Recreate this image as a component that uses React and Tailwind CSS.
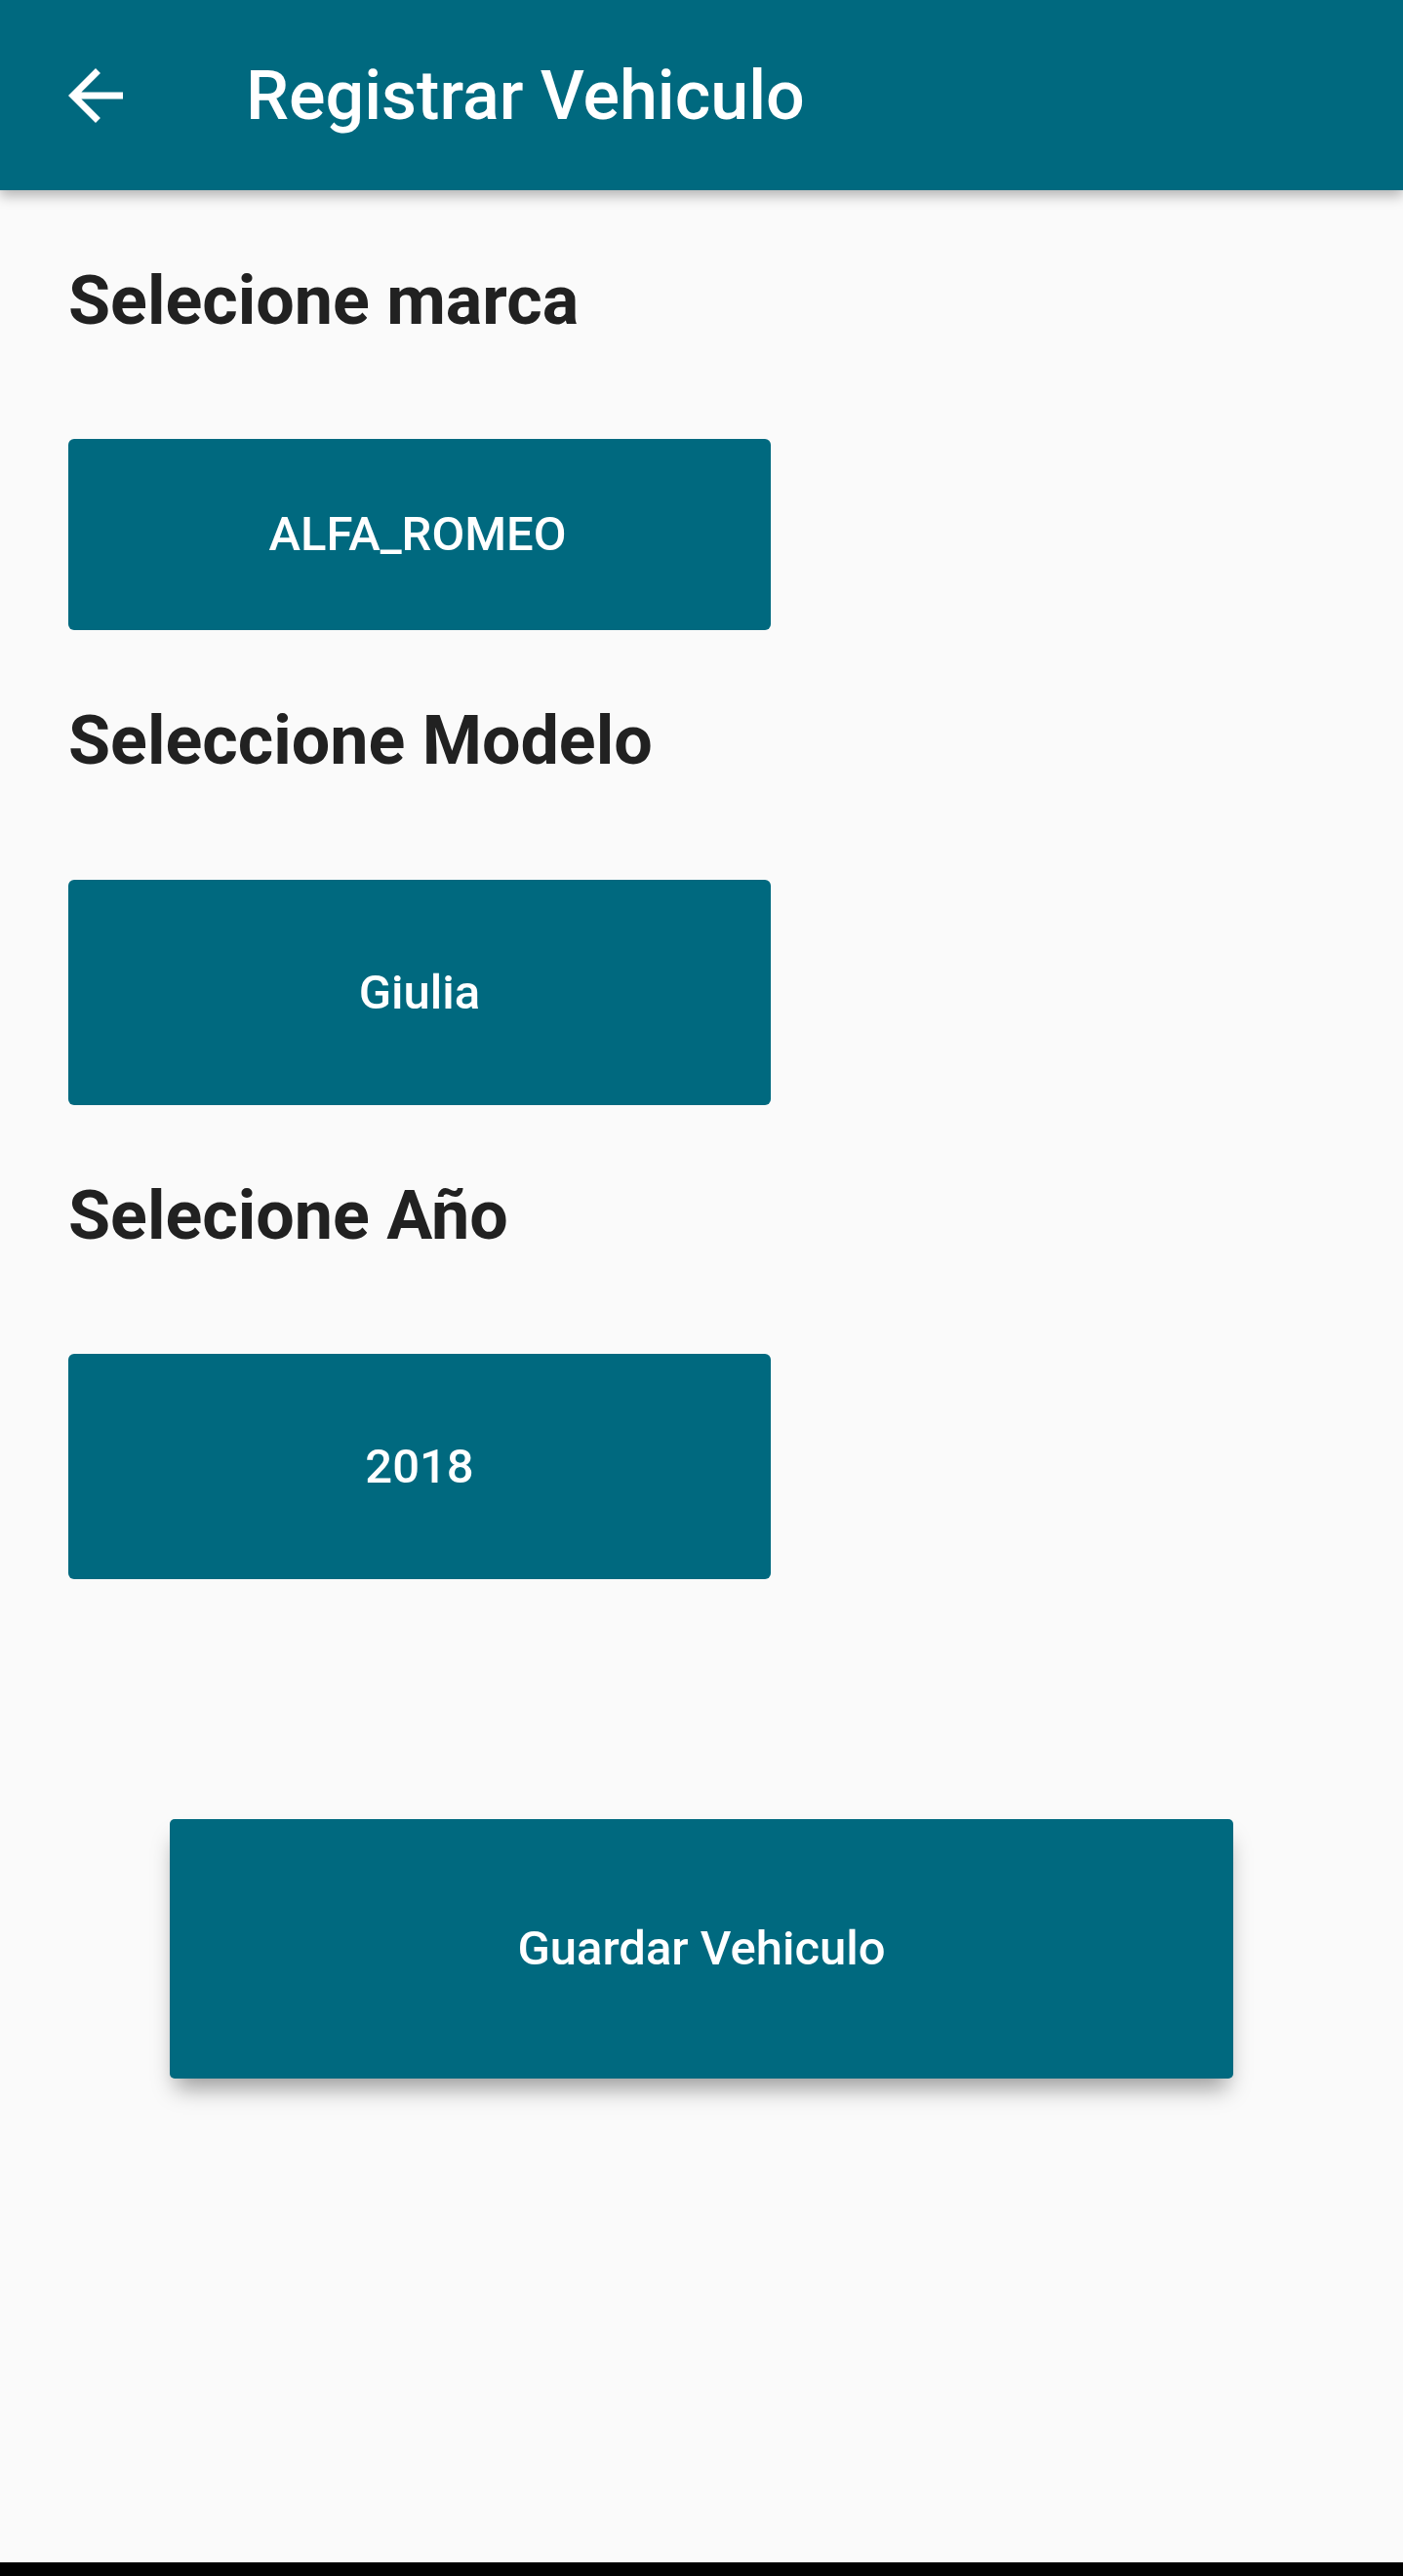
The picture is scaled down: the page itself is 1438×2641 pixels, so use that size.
import React from "react";

const BackArrow = () => (
  <svg viewBox="0 0 24 24" className="w-[84px] h-[84px]" fill="#ffffff">
    <path d="M20 11H7.83l5.59-5.59L12 4l-8 8 8 8 1.41-1.41L7.83 13H20v-2z" />
  </svg>
);

const Heading = ({ children, className = "" }) => (
  <h2
    className={`ml-[70px] text-[70px] leading-[70px] font-bold text-[#212121] ${className}`}
  >
    {children}
  </h2>
);

const PickerButton = ({ label, height, className = "" }) => (
  <button
    className={`ml-[70px] w-[720px] ${height} rounded-[6px] bg-[#00697f] text-white text-[49px] font-medium flex items-center justify-center ${className}`}
  >
    {label}
  </button>
);

export default function App() {
  return (
    <div
      className="h-[2641px] flex flex-col bg-[#fafafa]"
      style={{ fontFamily: "Roboto, 'Noto Sans', sans-serif" }}
    >
      <header className="h-[195px] shrink-0 bg-[#00697f] flex items-center shadow-[0_6px_12px_rgba(0,0,0,0.28)] relative z-10">
        <div className="w-[196px] h-full flex items-center pl-[56px]">
          <BackArrow />
        </div>
        <h1 className="ml-[56px] text-white text-[70px] font-medium leading-none">
          Registrar Vehiculo
        </h1>
      </header>

      <Heading className="mt-[78px]">Selecione marca</Heading>
      <PickerButton label="ALFA_ROMEO" height="h-[196px]" className="mt-[107px] pr-[4px]" />

      <Heading className="mt-[78px]">Seleccione Modelo</Heading>
      <PickerButton label="Giulia" height="h-[231px]" className="mt-[108px]" />

      <Heading className="mt-[78px]">Selecione Año</Heading>
      <PickerButton label="2018" height="h-[231px]" className="mt-[107px]" />

      <div className="mt-[246px] flex justify-center">
        <button className="w-[1090px] h-[266px] rounded-[5px] bg-[#00697f] text-white text-[49px] font-medium shadow-[0_16px_22px_-6px_rgba(0,0,0,0.38)]">
          Guardar Vehiculo
        </button>
      </div>

      <div className="flex-1" />
      <div className="h-[14px] bg-black shrink-0" />
    </div>
  );
}
